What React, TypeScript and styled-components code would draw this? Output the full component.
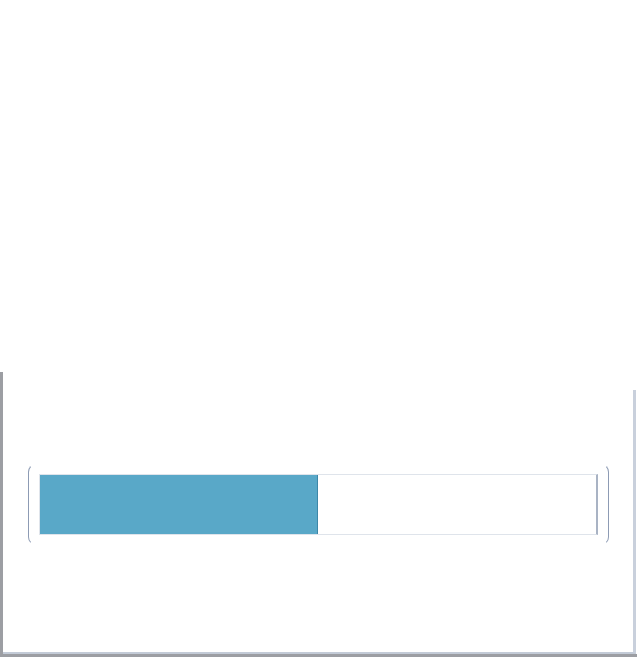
import styled, { createGlobalStyle } from "styled-components";

const GlobalStyle = createGlobalStyle`
  html, body {
    margin: 0;
    padding: 0;
    background: #ffffff;
    font-family: "Liberation Sans", Arial, sans-serif;
  }
`;

const Page = styled.div`
  width: 637px;
  height: 657px;
  overflow: hidden;
  display: flex;
  flex-direction: column;
`;

const Frame = styled.div`
  margin-top: 372px;
  flex: 1;
  display: flex;
  flex-direction: column;
  border-left: 3px solid #9c9ea3;
  border-bottom: 3px solid #9c9ea3;
`;

const Panel = styled.div`
  margin-top: 18px;
  margin-right: 1px;
  flex: 1;
  border-right: 3px solid #c9d0dc;
  border-bottom: 2px solid #c3cbd7;
  padding: 74px 24px 0 25px;
`;

const Holder = styled.div`
  height: 61px;
  padding: 9px 10px;
  border: 1px solid;
  border-color: transparent #8d9bb4;
  border-radius: 8px;
`;

const Track = styled.div`
  height: 100%;
  box-sizing: border-box;
  display: flex;
  border: 1px solid #dfe4eb;
  border-right: 2px solid #a9b3c4;
  background: #ffffff;
`;

const Fill = styled.div<{ $value: number }>`
  width: ${(p) => p.$value}%;
  height: 100%;
  background: #59a8c8;
  border-right: 1px solid #3d87a8;
  box-sizing: border-box;
`;

export default function App() {
  return (
    <>
      <GlobalStyle />
      <Page>
        <Frame>
          <Panel>
            <Holder>
              <Track>
                <Fill $value={50} />
              </Track>
            </Holder>
          </Panel>
        </Frame>
      </Page>
    </>
  );
}
